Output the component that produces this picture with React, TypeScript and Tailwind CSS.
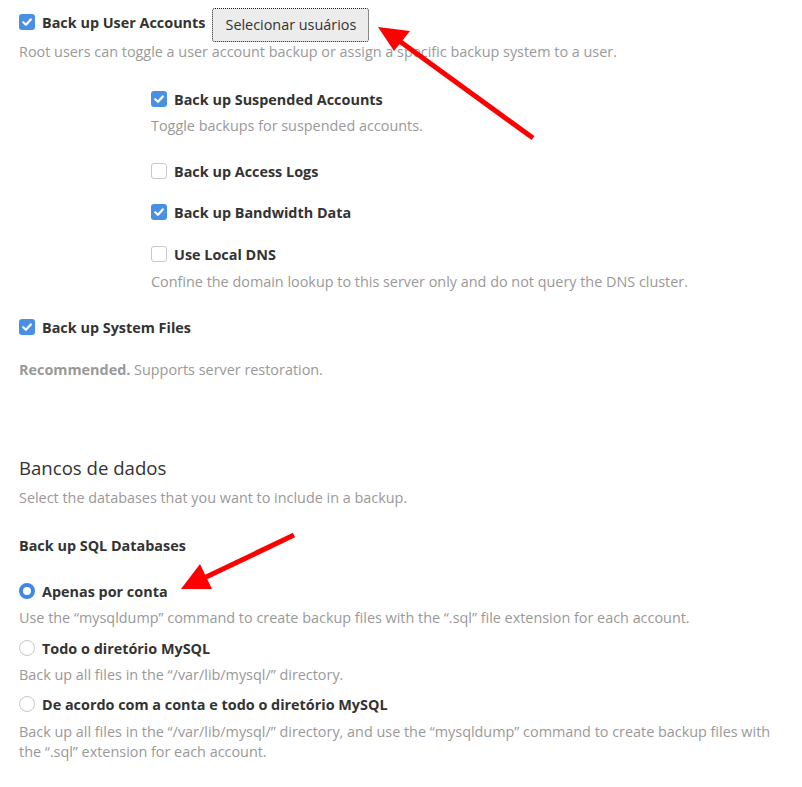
import React from "react";

function Check({ checked }: { checked: boolean }) {
  if (!checked)
    return <span className="block w-[16px] h-[16px] shrink-0 rounded-[3px] border border-[#c8c8c8] bg-white" />;
  return (
    <span className="flex items-center justify-center w-[16px] h-[16px] shrink-0 rounded-[3px] bg-[#4a8fe6]">
      <svg width="12" height="12" viewBox="0 0 12 12" fill="none">
        <polyline points="2.2,6.2 5,8.8 9.8,3.4" stroke="#fff" strokeWidth="2.2" strokeLinecap="round" strokeLinejoin="round" />
      </svg>
    </span>
  );
}

function Radio({ checked }: { checked: boolean }) {
  return checked ? (
    <span className="block w-[16px] h-[16px] shrink-0 rounded-full border-[4px] border-[#3d88e4] bg-white" />
  ) : (
    <span className="block w-[16px] h-[16px] shrink-0 rounded-full border border-[#c8c8c8] bg-white" />
  );
}

function Row({ label, checked, radio, className = "" }: { label: string; checked: boolean; radio?: boolean; className?: string }) {
  return (
    <div className={`flex items-start ${className}`}>
      <span className="mt-[1px]">{radio ? <Radio checked={checked} /> : <Check checked={checked} />}</span>
      <span className="ml-[7px] font-bold text-[#333]">{label}</span>
    </div>
  );
}

function Desc({ children, className = "" }: { children: React.ReactNode; className?: string }) {
  return <p className={`text-[#999] ${className}`}>{children}</p>;
}

export default function App() {
  return (
    <div className="relative min-h-[787px] bg-white font-['Open_Sans',sans-serif] text-[14.4px] leading-[20px] text-[#333]">
      <div className="pl-[19px] pt-[8px] w-[784px]">
        <div className="flex items-start">
          <span className="mt-[6px]">
            <Check checked />
          </span>
          <span className="ml-[7px] mt-[5px] font-bold">Back up User Accounts</span>
          <button className="ml-[7px] h-[34px] px-[12px] rounded-[3px] border border-dotted border-[#222] bg-[#ececec] text-[#333]">
            Selecionar usuários
          </button>
        </div>
        <Desc>Root users can toggle a user account backup or assign a specific backup system to a user.</Desc>

        <div className="pl-[132px] mt-[28px]">
          <Row checked label="Back up Suspended Accounts" />
          <Desc className="mt-[6px]">Toggle backups for suspended accounts.</Desc>
          <Row checked={false} label="Back up Access Logs" className="mt-[26px]" />
          <Row checked label="Back up Bandwidth Data" className="mt-[21px]" />
          <Row checked={false} label="Use Local DNS" className="mt-[22px]" />
          <Desc className="mt-[7px]">Confine the domain lookup to this server only and do not query the DNS cluster.</Desc>
        </div>

        <Row checked label="Back up System Files" className="mt-[26px]" />
        <Desc className="mt-[22px]">
          <span className="font-bold">Recommended.</span> Supports server restoration.
        </Desc>

        <h2 className="mt-[78px] text-[18.6px] leading-[20px] text-[#333]">Bancos de dados</h2>
        <Desc className="mt-[10px]">Select the databases that you want to include in a backup.</Desc>

        <div className="mt-[28px] font-bold">Back up SQL Databases</div>

        <Row radio checked label="Apenas por conta" className="mt-[26px]" />
        <Desc className="mt-[6px]">
          Use the “mysqldump” command to create backup files with the “.sql” file extension for each account.
        </Desc>
        <Row radio checked={false} label="Todo o diretório MySQL" className="mt-[11px]" />
        <Desc className="mt-[6px]">Back up all files in the “/var/lib/mysql/” directory.</Desc>
        <Row radio checked={false} label="De acordo com a conta e todo o diretório MySQL" className="mt-[10px]" />
        <Desc className="mt-[7px] w-[765px]">
          Back up all files in the “/var/lib/mysql/” directory, and use the “mysqldump” command to create backup files with
          the “.sql” extension for each account.
        </Desc>
      </div>

      <svg className="absolute inset-0 pointer-events-none" width="802" height="787" viewBox="0 0 802 787">
        <line x1="533" y1="138" x2="398" y2="40" stroke="#ff0000" strokeWidth="5" />
        <polygon points="378,27 410,31 394,51" fill="#ff0000" />
        <line x1="294" y1="535" x2="204" y2="578" stroke="#ff0000" strokeWidth="5" />
        <polygon points="181,589 200,564 212,589" fill="#ff0000" />
      </svg>
    </div>
  );
}
